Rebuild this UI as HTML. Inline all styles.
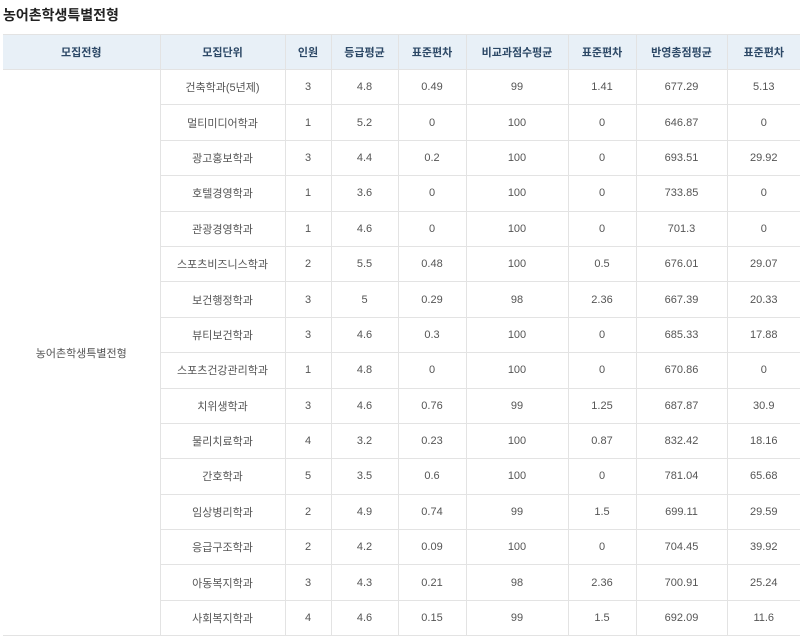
<!DOCTYPE html><html><head><meta charset="utf-8"><style>
body{margin:0;background:#fff;font-family:"Liberation Sans","Noto Sans CJK KR",sans-serif;}
h2{position:absolute;left:3px;top:5px;margin:0;font-size:14px;font-weight:bold;color:#222;}
table{position:absolute;left:3px;top:34px;border-collapse:collapse;table-layout:fixed;width:797px;}
td,th{border:1px solid #e3e3e3;text-align:center;font-size:11px;padding:0;}
th{background:#e8f0f7;color:#2c4866;height:34px;font-weight:bold;}
td{height:34.4px;color:#555;}
tr>*:first-child{border-left:none}
tr>*:last-child{border-right:none}
</style></head><body>
<h2>농어촌학생특별전형</h2>
<table>
<colgroup><col style="width:157px"><col style="width:125px"><col style="width:46px"><col style="width:67px"><col style="width:68px"><col style="width:102px"><col style="width:68px"><col style="width:91px"><col style="width:73px"></colgroup>
<tr><th>모집전형</th><th>모집단위</th><th>인원</th><th>등급평균</th><th>표준편차</th><th>비교과점수평균</th><th>표준편차</th><th>반영총점평균</th><th>표준편차</th></tr>
<tr><td rowspan="16">농어촌학생특별전형</td><td>건축학과(5년제)</td><td>3</td><td>4.8</td><td>0.49</td><td>99</td><td>1.41</td><td>677.29</td><td>5.13</td></tr>
<tr><td>멀티미디어학과</td><td>1</td><td>5.2</td><td>0</td><td>100</td><td>0</td><td>646.87</td><td>0</td></tr>
<tr><td>광고홍보학과</td><td>3</td><td>4.4</td><td>0.2</td><td>100</td><td>0</td><td>693.51</td><td>29.92</td></tr>
<tr><td>호텔경영학과</td><td>1</td><td>3.6</td><td>0</td><td>100</td><td>0</td><td>733.85</td><td>0</td></tr>
<tr><td>관광경영학과</td><td>1</td><td>4.6</td><td>0</td><td>100</td><td>0</td><td>701.3</td><td>0</td></tr>
<tr><td>스포츠비즈니스학과</td><td>2</td><td>5.5</td><td>0.48</td><td>100</td><td>0.5</td><td>676.01</td><td>29.07</td></tr>
<tr><td>보건행정학과</td><td>3</td><td>5</td><td>0.29</td><td>98</td><td>2.36</td><td>667.39</td><td>20.33</td></tr>
<tr><td>뷰티보건학과</td><td>3</td><td>4.6</td><td>0.3</td><td>100</td><td>0</td><td>685.33</td><td>17.88</td></tr>
<tr><td>스포츠건강관리학과</td><td>1</td><td>4.8</td><td>0</td><td>100</td><td>0</td><td>670.86</td><td>0</td></tr>
<tr><td>치위생학과</td><td>3</td><td>4.6</td><td>0.76</td><td>99</td><td>1.25</td><td>687.87</td><td>30.9</td></tr>
<tr><td>물리치료학과</td><td>4</td><td>3.2</td><td>0.23</td><td>100</td><td>0.87</td><td>832.42</td><td>18.16</td></tr>
<tr><td>간호학과</td><td>5</td><td>3.5</td><td>0.6</td><td>100</td><td>0</td><td>781.04</td><td>65.68</td></tr>
<tr><td>임상병리학과</td><td>2</td><td>4.9</td><td>0.74</td><td>99</td><td>1.5</td><td>699.11</td><td>29.59</td></tr>
<tr><td>응급구조학과</td><td>2</td><td>4.2</td><td>0.09</td><td>100</td><td>0</td><td>704.45</td><td>39.92</td></tr>
<tr><td>아동복지학과</td><td>3</td><td>4.3</td><td>0.21</td><td>98</td><td>2.36</td><td>700.91</td><td>25.24</td></tr>
<tr><td>사회복지학과</td><td>4</td><td>4.6</td><td>0.15</td><td>99</td><td>1.5</td><td>692.09</td><td>11.6</td></tr>
</table>
</body></html>
